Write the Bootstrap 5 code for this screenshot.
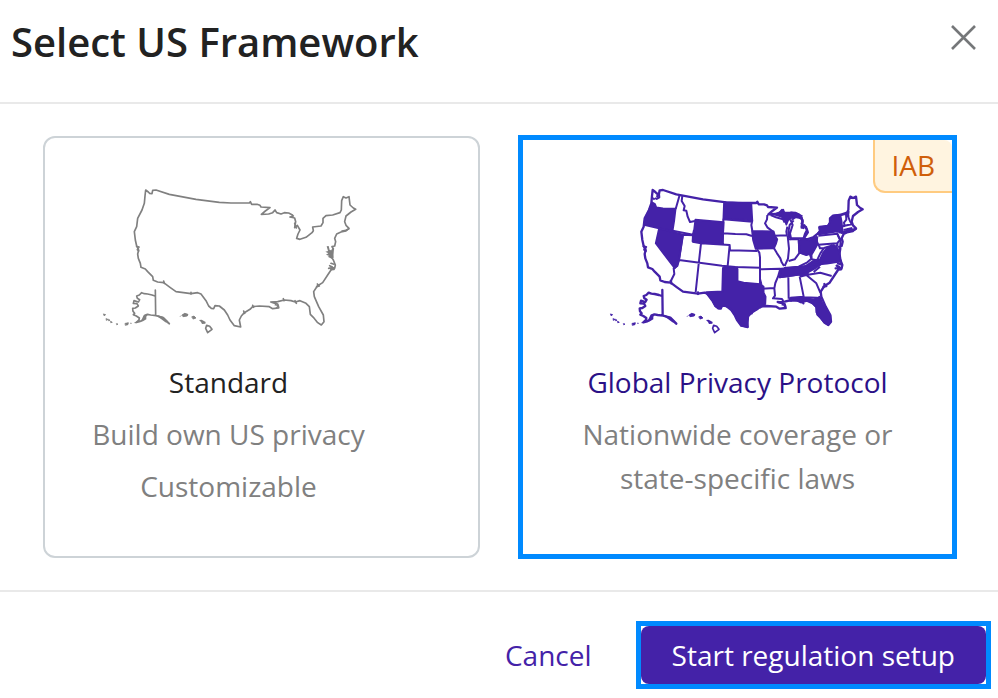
<!DOCTYPE html>
<html lang="en">
<head>
<meta charset="utf-8">
<meta name="viewport" content="width=device-width, initial-scale=1">
<title>Select US Framework</title>
<link rel="stylesheet" href="https://cdn.jsdelivr.net/npm/bootstrap@5.3.0/dist/css/bootstrap.min.css">
<style>
  body { font-family: "Open Sans", "Noto Sans", sans-serif; font-size: 28px; line-height: 44px; color: #222; }
  .dialog-head { padding: 12px 19px 30px 11px; border-bottom: 2px solid #e9e9e9; }
  .dialog-title { font-size: 40px; line-height: 60px; font-weight: 600; }
  .close-btn { padding: 10px 0; line-height: 0; color: #757779; }
  .choices { display: grid; grid-template-columns: 1fr 1fr; padding: 32px 42px 32px 43px; gap: 39px; }
  .choice { min-height: 422px; padding: 42px 0 24px; background: #fff; border: 2px solid #cdd3d7; border-radius: 12px; color: #222; }
  .choice-standard { padding-right: 66px; }
  .choice-selected { border: 4px solid #008aff; outline: 1px solid #008aff; border-radius: 0; color: #2b1187; padding-top: 40px; }
  .us-map { width: 266px; height: 160px; }
  .choice-name { margin-top: 20px; margin-bottom: 8px; }
  .choice-text { color: #808080; }
  .choice-text + .choice-text { margin-top: 8px; }
  .choice-copy { max-width: 330px; }
  .iab-tag { top: 0; right: 0; padding: 3px 17px 4px 16px; background: #fff4e0; color: #d05f0a; border: 2px solid #ffcb80; border-width: 0 0 2px 2px; border-radius: 0 8px 0 12px; }
  .dialog-foot { padding: 29px 7px 9px; gap: 28px; border-top: 2px solid #e9e9e9; }
  .foot-btn { font-size: 28px; line-height: 44px; padding: 7px 16px; color: #4422a8; text-decoration: none; }
  .start-ring { border: 5px solid #008aff; }
  .start-btn, .start-btn:hover { background: #4422a8; color: #fff; padding: 7px 31px; border: 0; border-radius: 8px; }
</style>
</head>
<body class="bg-white">
<svg width="0" height="0" class="position-absolute" aria-hidden="true">
  <defs>
    <g id="coast" stroke-linejoin="round" stroke-linecap="round">
      <path fill="none" d="M149 30L157 36 161 40 168 41 170 31 180 30 220 43 300 58 370 67 405 69 460 69 463 65 467 73 483 73 492 76 495 81 522 83 508 93 496 103 518 102 530 98 537 90 542 98 555 102 565 98 578 99 588 104 592 108 582 111 596 114 599 125 596 143 604 136 612 150 606 162 602 175 612 178 630 172 648 158 652 152 650 141 675 138 681 128 681 115 690 107 710 105 732 98 736 90 737 62 742 50 750 54 759 50 762 75 772 84 779 88 765 96 750 108 746 125 750 136 759 145 750 153 735 156 722 162 716 175 719 185 716 198 708 200 712 206 710 218 707 232 712 240 718 255 716 265 705 270 695 285 680 308 664 318 653 335 655 350 668 380 682 405 684 425 676 435 665 428 652 412 643 403 640 380 630 370 612 362 598 366 585 362 565 360 545 365 528 367 545 372 548 384 530 386 520 380 490 378 470 380 462 388 445 398 436 408 430 420 434 441 415 437 402 420 395 405 385 390 370 378 357 377 353 386 346 385 338 378 330 362 315 342 305 338 285 341 240 335 222 322 203 308 185 306 172 301 170 290 155 275 148 267 135 262 133 250 127 235 125 222 128 210 122 198 118 180 115 155 122 140 125 115 138 90 145 70 147 48Z"/>
      <path fill="none" d="M122 199l7 2-5 8 4 4M203 303l2 7M285 337v5M664 312l6 6-8 2M443 393l3 7M470 376l2 6M562 356l2 6M597 362l4 8M524 366l12 1M738 153l11-2 9-4M701 257l8 4M698 265l12-2 4 5M705 250l9 3M596 130l5 14"/>
      <path stroke="none" d="M692 199l6-1 3 12 5 1 4-10 2 14 1 18-6 3-12-6 5-2-10-4 7-4-9-5 8-2zM700 264l16-4-2 11-10 0zM525 365l14-1 2 9 8 1 1 9-12 1 6-6-9-2 2-4z"/>
      <path fill="none" d="M178 330L179 405M177 348L168 345 155 342 145 341 137 338 130 345 122 348 124 355 131 359 127 366 114 362 112 370 123 371 127 378 118 384 110 385 111 394 116 400 112 404 121 408 130 414 129 420 121 427 133 424 139 420 145 407 154 403 164 405 180 407 191 410 202 413 211 422 220 431"/>
      <path stroke="none" d="M133 426l8-9 4-13 12-3-6 9 0 8-10 6zM186 406l16 5 13 12 6 12-9-7-4-1-12-9-10-7zM88 430l9-2-1 6-7 2zM102 428l7 1-5 3zM23 402l6 2-4 3zM31 416l5 2-4 3zM38 418l4 3-4 1zM44 424l5 3-4 1zM62 431l4 1-3 2zM114 428l9-4 1 5-7 1zM258 405l8-5 10 3-2 5-12 2zM251 408l4-1-3 4zM288 410l6-2 6 6-8 3zM309 420l8-1 12 7-1 5-10 1-3-6z"/>
      <path stroke-width="2" d="M23 402l6 2-4 3zM31 416l5 2-4 3zM38 418l4 3-4 1zM44 424l5 3-4 1zM62 431l4 1-3 2zM88 430l9-2-1 6-7 2zM258 405l8-5 10 3-2 5-12 2zM288 410l6-2 6 6-8 3z"/>
      <path fill="none" stroke-width="5" d="M332 436L341 439 348 448 335 458 329 445Z"/>
    </g>
  </defs>
</svg>

<main>
  <header class="dialog-head d-flex justify-content-between align-items-start">
    <h1 class="dialog-title m-0">Select US Framework</h1>
    <button type="button" class="close-btn btn border-0" aria-label="Close">
      <svg width="32" height="32" viewBox="0 0 32 32" fill="none" stroke="currentColor" stroke-width="2.6"><path d="M5 4L28 27M28 4L5 27"/></svg>
    </button>
  </header>

  <section class="choices" aria-label="Frameworks">
    <button type="button" class="choice choice-standard d-flex flex-column align-items-center">
      <svg class="us-map" viewBox="0 0 798 480" fill="#808080" stroke="#808080" stroke-width="5" aria-hidden="true"><use href="#coast"/></svg>
      <span class="choice-name">Standard</span>
      <span class="choice-text">Build own US privacy</span>
      <span class="choice-text">Customizable</span>
    </button>

    <button type="button" class="choice choice-selected position-relative d-flex flex-column align-items-center" aria-pressed="true">
      <span class="iab-tag position-absolute">IAB</span>
      <svg class="us-map" viewBox="14 0 798 480" fill="#4422a8" stroke="#4422a8" stroke-width="6" stroke-linejoin="round" aria-hidden="true">
        <use href="#coast" x="8" stroke-width="7"/>
        <g stroke-width="5">
          <path d="M156 67L164 72 168 82 188 85 226 86 222 120 217 152 176 145 131 135 134 115 146 90Z"/>
          <path d="M176 145L248 164 236 240 230 258 223 265 166 190Z"/>
          <path d="M285 119L370 126 367 192 277 185Z"/>
          <path d="M371 67L453 69 456 121 369 116Z"/>
          <path d="M455 153L520 154 524 168 531 178 527 192 521 205 466 207 458 180Z"/>
          <path d="M370 262L411 262 411 303 430 308 455 310 480 312 490 320 490 338 496 350 495 372 480 382 458 394 444 408 442 441 422 437 404 405 390 385 375 378 363 379 356 386 344 378 335 362 318 340 318 336 368 334Z"/>
          <path d="M521 103L536 98 549 89 552 98 574 98 590 101 605 108 590 112 576 112 564 120 558 134 553 119 543 110Z"/>
          <path d="M595 181L613 176 627 181 648 170 652 192 642 210 635 222 618 224 596 217Z"/>
          <path d="M543 266L590 261 650 252 667 250 640 268 618 280 575 287 537 292Z"/>
          <path d="M617 257L638 243 659 238 668 218 680 203 692 201 700 195 712 205 719 225 722 244 680 251Z"/>
          <path d="M652 160L658 153 656 142 682 138 690 125 689 115 700 107 720 104 724 125 726 145 729 159 718 158 712 154 656 163Z"/>
          <path d="M568 354L600 353 641 358 658 350 664 365 674 385 690 406 691 424 683 434 671 427 654 405 648 397 648 382 634 367 614 360 603 368 590 362 568 362Z"/>
        </g>
        <g fill="none">
          <path d="M158 54L163 59M176 40L177 52 169 57 164 54M172 42L170 52M238 45L226 87M217 152L278 164 281 150M246 48L244 63 253 78 250 91 258 92 262 110 269 126 284 123M248 164L278 166 277 185M248 164L236 240 365 257 405 261 480 263M302 190L295 252 286 336M277 185L302 190 388 195 382 258M369 116L368 160 405 162 438 163 455 168M368 160L367 192M456 121L453 135 456 153M456 125L369 118M388 195L389 211 470 213M470 208L477 218 479 232 479 312M236 240L231 258 220 265 222 282 213 300 212 308M368 262L366 335"/>
          <path d="M411 266L411 303M501 105L500 118 494 130 501 142 518 155M511 105L527 112 548 118 553 128M522 167L560 166 558 155 561 140M562 168L566 206 563 236 553 258M521 205L530 220 540 235 544 247 551 258M479 268L540 266 533 290 525 309 522 325 524 347 518 355 545 357 549 363M479 297L483 312M483 326L522 324M564 178L596 178M595 181L598 218 583 238 565 243M598 218L618 225 628 221 633 236 621 247 595 260 551 264M651 169L649 185 654 194 710 190 719 180 709 158M649 185L640 210 633 220 634 238 650 241 660 220 671 204 659 205 655 194M671 204L698 196 709 201 712 190M564 292L565 356M598 290L610 350 570 353M598 290L618 285 648 310 660 338M538 292L625 280M618 285L660 278 694 288M610 352L650 353M659 260L640 276M656 250L724 244"/>
          <path d="M567 175L564 156 568 135 580 121M573 180L569 160 577 135 570 118M575 119L590 108 607 120 604 139 617 140 623 157 611 175 573 175M604 112L607 140"/>
          <path d="M720 106L737 101 738 119 731 128 733 141M745 93L743 108 748 121 754 133M741 96L745 110M726 139L757 132M730 150L756 144M743 144L744 155M654 167L711 161 716 172 721 179 720 196M722 159L744 153 765 147"/>
        </g>
      </svg>
      <span class="choice-name">Global Privacy Protocol</span>
      <span class="choice-text choice-copy">Nationwide coverage or state-specific laws</span>
    </button>
  </section>

  <footer class="dialog-foot d-flex justify-content-end align-items-center">
    <button type="button" class="foot-btn btn border-0">Cancel</button>
    <div class="start-ring"><button type="button" class="foot-btn start-btn btn d-block">Start regulation setup</button></div>
  </footer>
</main>
<script src="https://cdn.jsdelivr.net/npm/bootstrap@5.3.0/dist/js/bootstrap.bundle.min.js"></script>
</body>
</html>
